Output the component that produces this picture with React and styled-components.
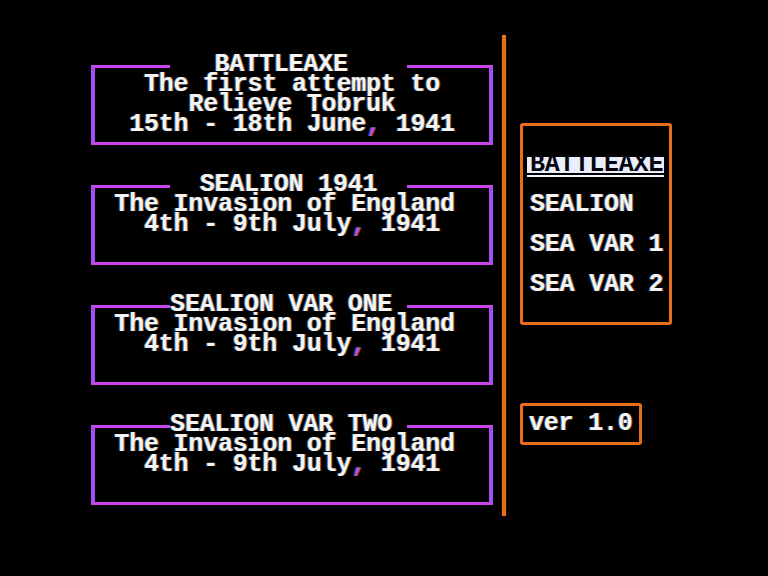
import React from "react";
import styled, { createGlobalStyle } from "styled-components";

const Global = createGlobalStyle`
  html, body {
    margin: 0;
    padding: 0;
    background: #000;
  }
  body {
    width: 768px;
    height: 576px;
    overflow: hidden;
    font-family: "Liberation Mono", "DejaVu Sans Mono", monospace;
    font-weight: 700;
    font-size: 25px;
    letter-spacing: -0.2px;
    color: #f4f4f4;
    text-shadow: -1px 0 0 rgba(90, 170, 255, 0.55), 1px 0 0 rgba(255, 150, 60, 0.5);
  }
`;

const MAGENTA = "#cc44ee";
const VIOLET = "#a54cf6";
const ORANGE = "#e4701c";

const Screen = styled.div`
  display: flex;
  align-items: flex-start;
  width: 768px;
  height: 576px;
  box-sizing: border-box;
  padding-left: 91px;
  background: #000;
`;

const Scenarios = styled.div`
  display: flex;
  flex-direction: column;
  gap: 30px;
  width: 402px;
  margin-top: 55px;
`;

const Panel = styled.section`
  display: flex;
  flex-direction: column;
`;

const Header = styled.div`
  display: grid;
  grid-template-columns: 79px 237px 1fr;
  height: 20px;
`;

const Seg = styled.div`
  margin-top: 10px;
  border-top: 3px solid ${MAGENTA};
  ${(p) => (p.$side === "left" ? `border-left: 4px solid ${VIOLET};` : `border-right: 4px solid ${VIOLET};`)}
`;

const Title = styled.h2`
  margin: 0;
  font: inherit;
  line-height: 20px;
  text-align: center;
  white-space: pre;
`;

const Body = styled.div`
  height: 70px;
  box-sizing: border-box;
  border-left: 4px solid ${VIOLET};
  border-right: 4px solid ${VIOLET};
  border-bottom: 3px solid ${MAGENTA};
  text-align: center;
  line-height: 20px;
  white-space: pre;
`;

const Line = styled.div``;

const Comma = styled.span`
  color: #c04ce8;
`;

const Divider = styled.div`
  width: 4px;
  height: 481px;
  margin: 35px 0 0 9px;
  background: ${ORANGE};
  box-shadow: 0 0 1px ${ORANGE};
`;

const Side = styled.aside`
  display: flex;
  flex-direction: column;
  align-items: flex-start;
  gap: 78px;
  margin: 123px 0 0 14px;
`;

const Menu = styled.ul`
  list-style: none;
  margin: 0;
  width: 152px;
  box-sizing: border-box;
  padding: 19px 0 17px 7px;
  border: 3px solid ${ORANGE};
  border-radius: 3px;
`;

const Item = styled.li`
  height: 40px;
  line-height: 40px;
  white-space: nowrap;
`;

const Selected = styled.span`
  display: inline-block;
  margin-left: -3px;
  padding: 0 1px 0 3px;
  line-height: 16px;
  background: #e8eefc;
  color: #06060c;
  text-shadow: none;
  box-shadow: 0 2px 0 #000, 0 4px 0 #eef2ff;
`;

const Version = styled.div`
  width: 122px;
  height: 42px;
  box-sizing: border-box;
  padding-left: 6px;
  border: 3px solid ${ORANGE};
  border-radius: 3px;
  line-height: 36px;
  white-space: nowrap;
`;

// Text on the original screen is centred on a character grid: odd-length
// strings sit half a cell to the left, as if padded with a trailing space.
const grid = (t) => (typeof t === "string" && t.length % 2 === 1 ? t + " " : t);

const dated = (range, month) => (
  <>
    {range} {month}
    <Comma>,</Comma> 1941
  </>
);

const scenarios = [
  {
    title: "BATTLEAXE",
    lines: ["The first attempt to", "Relieve Tobruk", dated("15th - 18th", "June")],
  },
  {
    title: "SEALION 1941",
    lines: ["The Invasion of England", dated("4th - 9th", "July")],
  },
  {
    title: "SEALION VAR ONE",
    lines: ["The Invasion of England", dated("4th - 9th", "July")],
  },
  {
    title: "SEALION VAR TWO",
    lines: ["The Invasion of England", dated("4th - 9th", "July")],
  },
];

const menu = ["BATTLEAXE", "SEALION", "SEA VAR 1", "SEA VAR 2"];

export default function App() {
  return (
    <>
      <Global />
      <Screen>
        <Scenarios>
          {scenarios.map((s) => (
            <Panel key={s.title}>
              <Header>
                <Seg $side="left" />
                <Title>{grid(s.title)}</Title>
                <Seg $side="right" />
              </Header>
              <Body>
                {s.lines.map((l, i) => (
                  <Line key={i}>{grid(l)}</Line>
                ))}
              </Body>
            </Panel>
          ))}
        </Scenarios>
        <Divider />
        <Side>
          <Menu>
            {menu.map((m, i) => (
              <Item key={m}>{i === 0 ? <Selected>{m}</Selected> : m}</Item>
            ))}
          </Menu>
          <Version>ver 1.0</Version>
        </Side>
      </Screen>
    </>
  );
}
